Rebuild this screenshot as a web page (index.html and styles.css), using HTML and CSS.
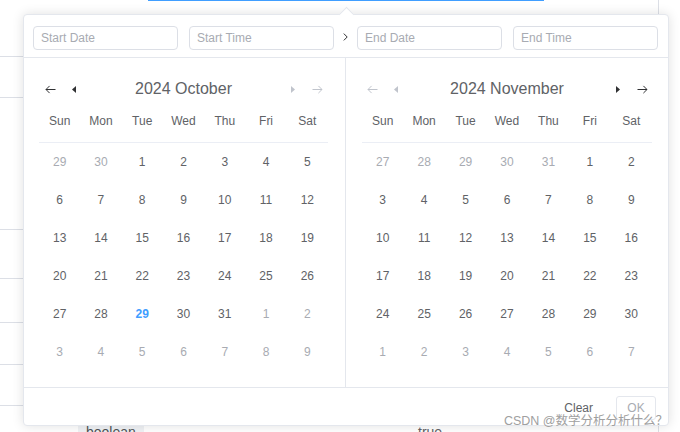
FILE: index.html
```html
<!DOCTYPE html>
<html lang="en">
<head>
  <meta charset="UTF-8">
  <meta name="viewport" content="width=device-width, initial-scale=1.0">
  <title>Date Range Picker</title>
  <link rel="stylesheet" href="styles.css">
</head>
<body>

  <!-- Page content behind the popup -->
  <div class="grid">
    <div class="row row-a"><div class="focus-bar"></div></div>
    <div class="row row-b"></div>
    <div class="row row-c"></div>
    <div class="row row-d"></div>
    <div class="row row-e"></div>
    <div class="row row-f"></div>
    <div class="row row-g"></div>
    <div class="row row-last">
      <div class="cell cell-type"><span class="tag">boolean</span></div>
      <div class="cell cell-value">true</div>
    </div>
  </div>

  <!-- Date range picker popup -->
  <div class="picker">
    <div class="time-head">
      <div class="editors">
        <input class="field" placeholder="Start Date" readonly>
        <input class="field" placeholder="Start Time" readonly>
      </div>
      <div class="sep">
        <svg width="5" height="8" viewBox="0 0 5 8"><path d="M0.8 0.6L4.2 4L0.8 7.4" fill="none" stroke="#303133" stroke-width="1"/></svg>
      </div>
      <div class="editors">
        <input class="field" placeholder="End Date" readonly>
        <input class="field" placeholder="End Time" readonly>
      </div>
    </div>

    <div class="panes">
      <div class="pane pane-left">
        <div class="month-head">
          <div class="nav-group">
            <button class="nav-btn"><svg width="11" height="9" viewBox="0 0 11 9"><path d="M10.5 4.5H1M4.6 0.9L1 4.5l3.6 3.6" fill="none" stroke="currentColor" stroke-width="1"/></svg></button>
            <button class="nav-btn"><svg width="4" height="7" viewBox="0 0 4 7"><path d="M4 0L0 3.5L4 7Z" fill="currentColor"/></svg></button>
          </div>
          <div class="title">2024 October</div>
          <div class="nav-group">
            <button class="nav-btn off"><svg width="4" height="7" viewBox="0 0 4 7"><path d="M0 0L4 3.5L0 7Z" fill="currentColor"/></svg></button>
            <button class="nav-btn off"><svg width="11" height="9" viewBox="0 0 11 9"><path d="M0.5 4.5H10M6.4 0.9L10 4.5l-3.6 3.6" fill="none" stroke="currentColor" stroke-width="1"/></svg></button>
          </div>
        </div>
        <table class="days">
          <thead>
            <tr><th>Sun</th><th>Mon</th><th>Tue</th><th>Wed</th><th>Thu</th><th>Fri</th><th>Sat</th></tr>
          </thead>
          <tbody>
            <tr><td class="other">29</td><td class="other">30</td><td>1</td><td>2</td><td>3</td><td>4</td><td>5</td></tr>
            <tr><td>6</td><td>7</td><td>8</td><td>9</td><td>10</td><td>11</td><td>12</td></tr>
            <tr><td>13</td><td>14</td><td>15</td><td>16</td><td>17</td><td>18</td><td>19</td></tr>
            <tr><td>20</td><td>21</td><td>22</td><td>23</td><td>24</td><td>25</td><td>26</td></tr>
            <tr><td>27</td><td>28</td><td class="today">29</td><td>30</td><td>31</td><td class="other">1</td><td class="other">2</td></tr>
            <tr><td class="other">3</td><td class="other">4</td><td class="other">5</td><td class="other">6</td><td class="other">7</td><td class="other">8</td><td class="other">9</td></tr>
          </tbody>
        </table>
      </div>

      <div class="pane pane-right">
        <div class="month-head">
          <div class="nav-group">
            <button class="nav-btn off"><svg width="11" height="9" viewBox="0 0 11 9"><path d="M10.5 4.5H1M4.6 0.9L1 4.5l3.6 3.6" fill="none" stroke="currentColor" stroke-width="1"/></svg></button>
            <button class="nav-btn off"><svg width="4" height="7" viewBox="0 0 4 7"><path d="M4 0L0 3.5L4 7Z" fill="currentColor"/></svg></button>
          </div>
          <div class="title">2024 November</div>
          <div class="nav-group">
            <button class="nav-btn"><svg width="4" height="7" viewBox="0 0 4 7"><path d="M0 0L4 3.5L0 7Z" fill="currentColor"/></svg></button>
            <button class="nav-btn"><svg width="11" height="9" viewBox="0 0 11 9"><path d="M0.5 4.5H10M6.4 0.9L10 4.5l-3.6 3.6" fill="none" stroke="currentColor" stroke-width="1"/></svg></button>
          </div>
        </div>
        <table class="days">
          <thead>
            <tr><th>Sun</th><th>Mon</th><th>Tue</th><th>Wed</th><th>Thu</th><th>Fri</th><th>Sat</th></tr>
          </thead>
          <tbody>
            <tr><td class="other">27</td><td class="other">28</td><td class="other">29</td><td class="other">30</td><td class="other">31</td><td>1</td><td>2</td></tr>
            <tr><td>3</td><td>4</td><td>5</td><td>6</td><td>7</td><td>8</td><td>9</td></tr>
            <tr><td>10</td><td>11</td><td>12</td><td>13</td><td>14</td><td>15</td><td>16</td></tr>
            <tr><td>17</td><td>18</td><td>19</td><td>20</td><td>21</td><td>22</td><td>23</td></tr>
            <tr><td>24</td><td>25</td><td>26</td><td>27</td><td>28</td><td>29</td><td>30</td></tr>
            <tr><td class="other">1</td><td class="other">2</td><td class="other">3</td><td class="other">4</td><td class="other">5</td><td class="other">6</td><td class="other">7</td></tr>
          </tbody>
        </table>
      </div>
    </div>

    <div class="foot">
      <button class="btn-clear">Clear</button>
      <button class="btn-ok" disabled>OK</button>
    </div>
  </div>

  <div class="watermark">CSDN @数学分析分析什么？</div>

</body>
</html>
```

FILE: styles.css
```css
body {
  margin: 0;
  padding: 0;
  width: 680px;
  height: 432px;
  overflow: hidden;
  position: relative;
  background: #fff;
  font-family: "Liberation Sans", Arial, "Noto Sans CJK SC", sans-serif;
}

/* Table rows of the page underneath */
.grid {
  width: 658px;
  border-right: 1px solid #dcdfe6;
}

.row {
  border-bottom: 1px solid #dcdfe6;
  box-sizing: content-box;
}

.row-a { height: 56px; padding-left: 148px; }
.row-b { height: 40px; }
.row-c { height: 131px; }
.row-d { height: 48px; }
.row-e { height: 43px; }
.row-f { height: 41px; }
.row-g { height: 40px; }

.focus-bar {
  width: 396px;
  height: 1px;
  background: #409eff;
}

.row-last {
  display: flex;
  height: 40px;
  border-bottom: none;
  font-size: 14px;
  color: #606266;
}

.cell { padding-top: 16px; }
.cell-type { width: 332px; padding-left: 78px; }
.cell-value { padding-left: 8px; line-height: 20px; }

.tag {
  display: inline-block;
  height: 20px;
  line-height: 20px;
  padding: 0 8px;
  background: #f0f2f5;
  color: #505256;
}

/* Picker popup */
.picker {
  position: absolute;
  top: 14px;
  left: 23px;
  width: 646px;
  height: 412px;
  box-sizing: border-box;
  border: 1px solid #e4e7ed;
  border-radius: 4px;
  background: #fff;
  box-shadow: 0 0 12px rgba(0, 0, 0, 0.12);
  color: #606266;
}

/* little pointer on top edge */
.picker::before {
  content: '';
  position: absolute;
  top: -6px;
  left: 317px;
  width: 10px;
  height: 10px;
  background: #fff;
  border-top: 1px solid #e4e7ed;
  border-left: 1px solid #e4e7ed;
  transform: rotate(45deg);
}

.time-head {
  display: flex;
  align-items: center;
  padding: 11px 10px 7px 9px;
  border-bottom: 1px solid #e4e7ed;
}

.editors {
  display: flex;
  gap: 11px;
}

.field {
  width: 145px;
  height: 24px;
  box-sizing: border-box;
  margin: 0;
  padding: 0 7px;
  border: 1px solid #dcdfe6;
  border-radius: 4px;
  font-family: inherit;
  font-size: 12px;
  color: #606266;
  outline: none;
}

.field::placeholder { color: #a8abb2; }

.sep {
  width: 23px;
  height: 24px;
  display: flex;
  justify-content: center;
  align-items: center;
  padding-bottom: 2px;
  box-sizing: border-box;
}

.panes {
  display: flex;
}

.pane {
  width: 322px;
  box-sizing: border-box;
  padding: 16px;
}

.pane-left {
  padding-left: 15px;
  padding-right: 17px;
  border-right: 1px solid #e4e7ed;
}

.month-head {
  display: flex;
  align-items: center;
  height: 28px;
  padding-top: 1px;
}

.pane-left .month-head { margin-left: 1px; margin-right: 1px; }

.nav-group {
  display: flex;
  gap: 4px;
}

.nav-btn {
  width: 20px;
  height: 28px;
  padding: 0;
  border: none;
  background: none;
  display: flex;
  justify-content: center;
  align-items: center;
  color: #303133;
  cursor: pointer;
}

.nav-btn.off { color: #c0c4cc; cursor: default; }

.title {
  flex: 1;
  text-align: center;
  font-size: 16px;
  color: #606266;
}

/* Day grid */
.days {
  width: 100%;
  table-layout: fixed;
  border-collapse: separate;
  border-spacing: 0;
  font-size: 12px;
  margin-top: -1px;
}

.days th {
  padding: 9px 0 11px;
  line-height: 20px;
  font-weight: 400;
  color: #606266;
  border-bottom: 1px solid #ebeef5;
}

.days td {
  height: 38px;
  padding: 0;
  text-align: center;
  color: #606266;
}

.days td.other { color: #a8abb2; }
.days td.today { color: #409eff; font-weight: 700; }

/* Footer buttons */
.foot {
  display: flex;
  justify-content: flex-end;
  align-items: center;
  padding: 8px 12px 5px;
  border-top: 1px solid #e4e7ed;
}

.btn-clear {
  height: 24px;
  padding: 0 11px;
  border: none;
  background: none;
  font-family: inherit;
  font-size: 12px;
  color: #606266;
}

.btn-ok {
  width: 40px;
  height: 24px;
  margin-left: 12px;
  padding: 0;
  border: 1px solid #e4e7ed;
  border-radius: 3px;
  background: #fff;
  font-family: inherit;
  font-size: 12px;
  color: #a8abb2;
}

.watermark {
  position: absolute;
  top: 410px;
  right: 12px;
  font-family: "Liberation Sans", "Noto Sans CJK SC", sans-serif;
  font-size: 12.5px;
  color: #a0a0a0;
  text-shadow: 0 0 1px #fff;
  white-space: nowrap;
}
```
